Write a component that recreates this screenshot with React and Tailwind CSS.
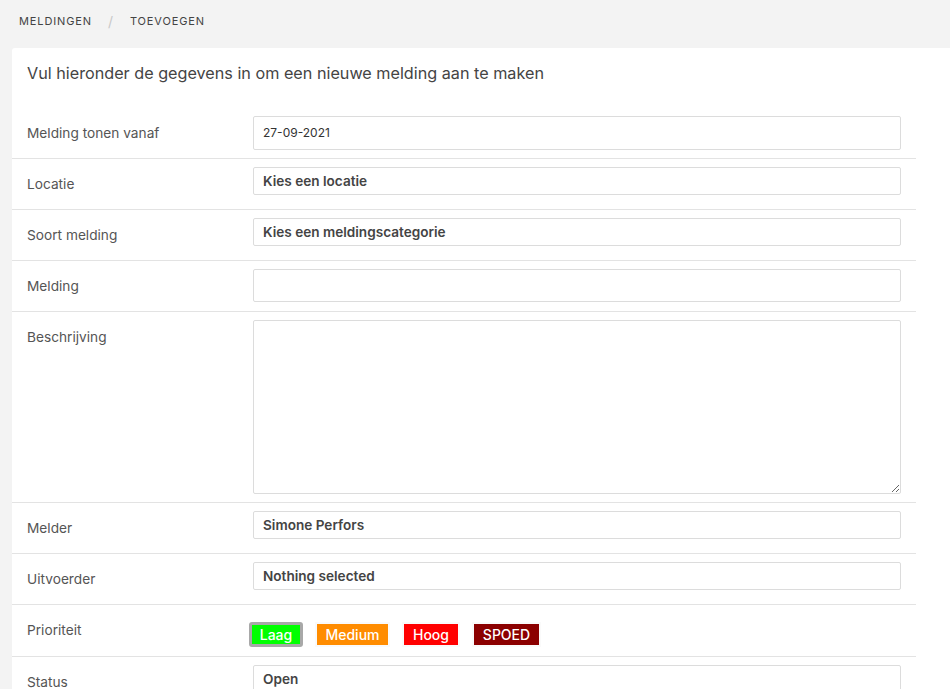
import React from 'react';

const inter = { fontFamily: '"Inter", "Noto Sans", sans-serif' };

function Row({ label, children, className = '' }) {
  return (
    <div className={`flex border-b border-[#e3e3e3] px-[15px] ${className}`}>
      <div className="w-[226px] shrink-0 pt-[17px] text-[13.7px] leading-[16px] text-[#555]">{label}</div>
      <div className="flex-1 min-h-[50px] pt-[8px] pb-[8px]">{children}</div>
    </div>
  );
}

function SelectBox({ value }) {
  return (
    <div className="h-[28px] rounded-[2px] border border-[#dcdcdc] bg-white px-[9px] flex items-center text-[13.6px] font-semibold text-[#444]">
      {value}
    </div>
  );
}

const priorities = [
  { name: 'Laag', cls: 'w-[54px] rounded-[3px] border-[3px] border-[#a8a8a8] bg-[#00ff00]' },
  { name: 'Medium', cls: 'w-[75px] border-2 border-[#fafafa] bg-[#ff8c00]' },
  { name: 'Hoog', cls: 'w-[58px] border-2 border-[#fafafa] bg-[#ff0000]' },
  { name: 'SPOED', cls: 'w-[69px] border-2 border-[#fafafa] bg-[#8b0000]' },
];

export default function App() {
  return (
    <div className="min-h-[689px] bg-[#f3f3f3]" style={inter}>
      <div className="flex items-center h-[42px] pl-[19px] text-[11px] tracking-[0.08em] text-[#444]">
        <span>MELDINGEN</span>
        <span className="mx-[16px] text-[#c8c8c8] text-[14px]">/</span>
        <span>TOEVOEGEN</span>
      </div>
      <div className="ml-[12px] mt-[6px] bg-white rounded-tl-[3px] pb-[20px]">
        <div className="pl-[15px] pt-[13px] h-[60px] text-[16.2px] text-[#444]">
          Vul hieronder de gegevens in om een nieuwe melding aan te maken
        </div>
        <div className="w-[904px]">
          <Row label="Melding tonen vanaf">
            <div className="h-[34px] rounded-[2px] border border-[#dcdcdc] px-[9px] flex items-center text-[12px] text-[#333]">27-09-2021</div>
          </Row>
          <Row label="Locatie"><SelectBox value="Kies een locatie" /></Row>
          <Row label="Soort melding"><SelectBox value="Kies een meldingscategorie" /></Row>
          <Row label="Melding">
            <div className="h-[33px] rounded-[2px] border border-[#dcdcdc]" />
          </Row>
          <Row label="Beschrijving">
            <textarea className="block w-full h-[174px] rounded-[2px] border border-[#dcdcdc] outline-none" readOnly />
          </Row>
          <Row label="Melder"><SelectBox value="Simone Perfors" /></Row>
          <Row label="Uitvoerder"><SelectBox value="Nothing selected" /></Row>
          <Row label="Prioriteit">
            <div className="flex items-center gap-[12px] pt-[9px] pb-[1px] -ml-[4px] text-[14px] font-medium text-white">
              {priorities.map((p) => (
                <div key={p.name} className={`h-[25px] flex items-center justify-center ${p.cls}`}>{p.name}</div>
              ))}
            </div>
          </Row>
          <Row label="Status" className="border-b-0"><SelectBox value="Open" /></Row>
        </div>
      </div>
    </div>
  );
}
